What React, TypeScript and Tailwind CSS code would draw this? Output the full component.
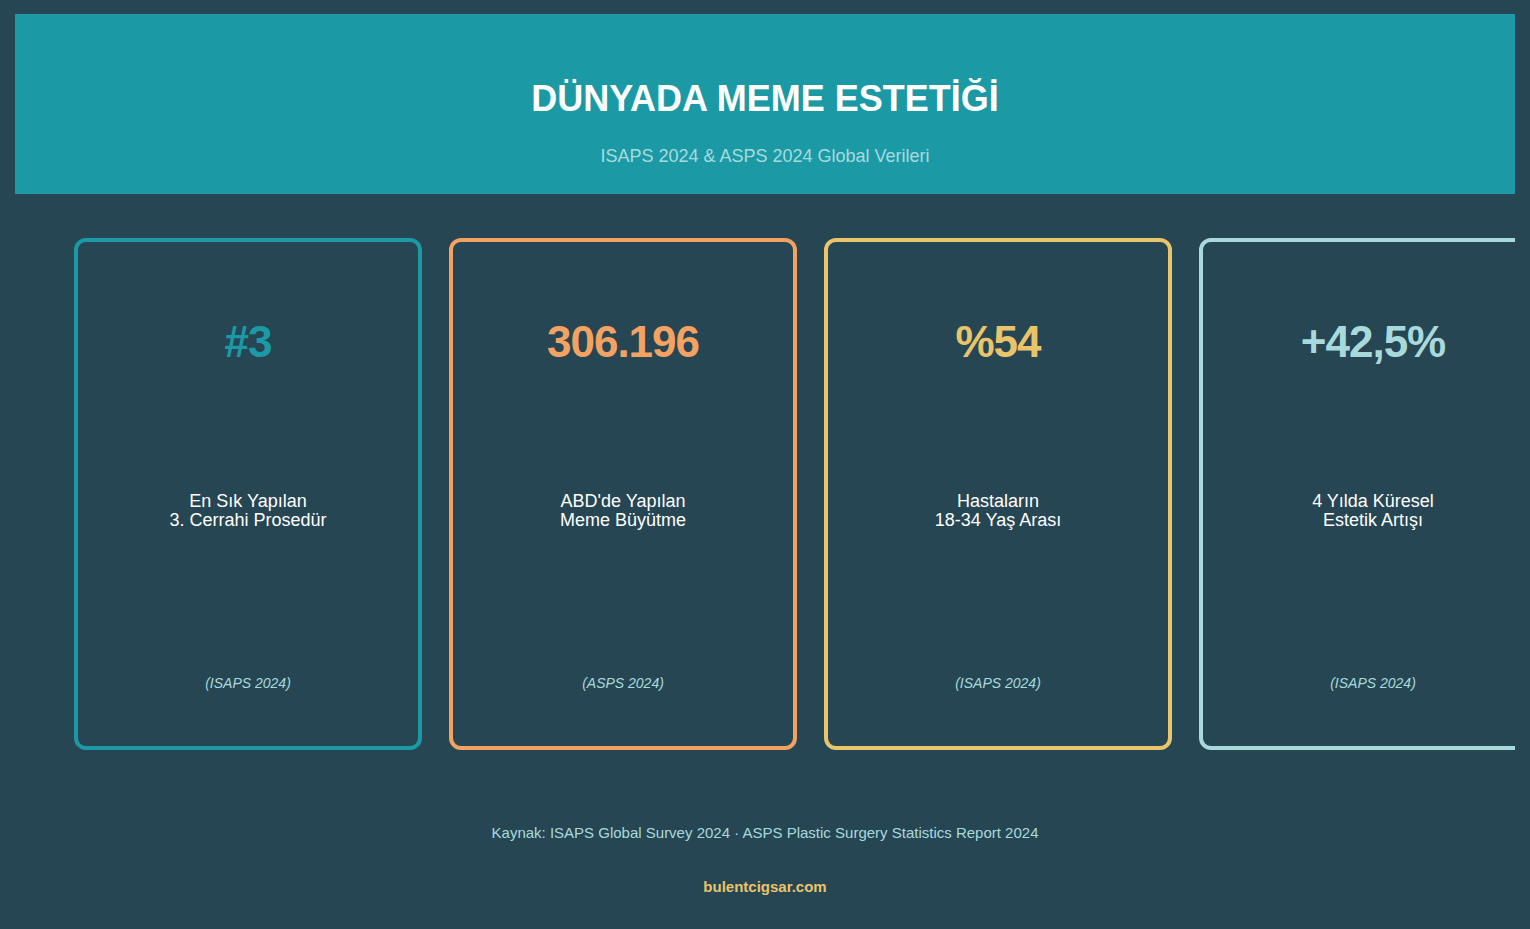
const cards = [
  { value: "#3", l1: "En Sık Yapılan", l2: "3. Cerrahi Prosedür", src: "(ISAPS 2024)", border: "border-[#1b9aa6]", text: "text-[#1b9aa6]" },
  { value: "306.196", l1: "ABD'de Yapılan", l2: "Meme Büyütme", src: "(ASPS 2024)", border: "border-[#f4a261]", text: "text-[#f4a261]" },
  { value: "%54", l1: "Hastaların", l2: "18-34 Yaş Arası", src: "(ISAPS 2024)", border: "border-[#e9c46a]", text: "text-[#e9c46a]" },
  { value: "+42,5%", l1: "4 Yılda Küresel", l2: "Estetik Artışı", src: "(ISAPS 2024)", border: "border-[#a8dadc]", text: "text-[#a8dadc]" },
];

export default function App() {
  return (
    <div
      className="min-h-[929px] bg-[#264653] px-[15px] pt-[14px]"
      style={{ fontFamily: '"Liberation Sans", Arial, sans-serif' }}
    >
      <div className="flex h-[180px] flex-col items-center bg-[#1b9aa6] pt-[64px]">
        <h1 className="text-[36px] font-bold leading-[42px] text-white">DÜNYADA MEME ESTETİĞİ</h1>
        <p className="mt-[26px] text-[18px] leading-[20px] text-[#a8dadc]">ISAPS 2024 &amp; ASPS 2024 Global Verileri</p>
      </div>
      <div className="overflow-hidden pl-[59px] pt-[44px]">
        <div className="flex gap-[27px]">
          {cards.map((c) => (
            <div key={c.value} className={`flex h-[512px] w-[348px] shrink-0 flex-col items-center rounded-[12px] border-[4px] ${c.border}`}>
              <div className={`mt-[75px] text-[44px] font-bold leading-[50px] tracking-[-1px] ${c.text}`}>{c.value}</div>
              <div className="mt-[125px] text-center text-[18px] leading-[19px] text-white">
                <div>{c.l1}</div>
                <div>{c.l2}</div>
              </div>
              <div className="mt-[143px] text-[14px] italic text-[#a8dadc]">{c.src}</div>
            </div>
          ))}
        </div>
      </div>
      <p className="mt-[72px] text-center text-[15px] text-[#a8dadc]">Kaynak: ISAPS Global Survey 2024 · ASPS Plastic Surgery Statistics Report 2024</p>
      <p className="mt-[31px] text-center text-[15px] font-bold text-[#e9c46a]">bulentcigsar.com</p>
    </div>
  );
}
